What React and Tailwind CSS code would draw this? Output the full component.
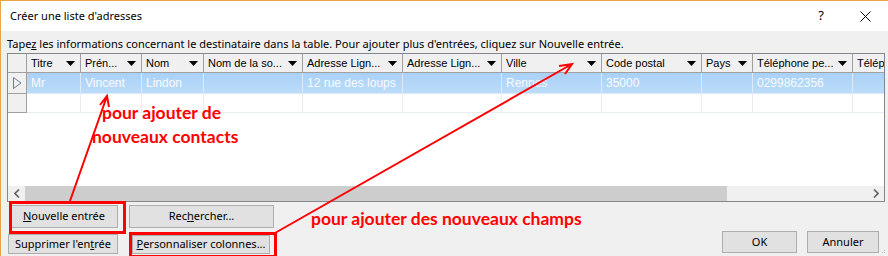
import React from "react";

const UI = "font-['Noto_Sans',sans-serif]";
const GRID = "font-['Liberation_Sans',Arial,sans-serif]";
const NOTE = "font-['Lato',sans-serif]";

const columns = [
  { label: "Titre", value: "Mr" },
  { label: "Prén...", value: "Vincent" },
  { label: "Nom", value: "Lindon" },
  { label: "Nom de la so...", value: "" },
  { label: "Adresse Lign...", value: "12 rue des loups" },
  { label: "Adresse Lign...", value: "" },
  { label: "Ville", value: "Rennes" },
  { label: "Code postal", value: "35000" },
  { label: "Pays", value: "" },
  { label: "Téléphone pe...", value: "0299862356" },
  { label: "Téléphone pr...", value: "" },
];

const DropArrow = () => (
  <svg width="9" height="5" viewBox="0 0 9 5" className="shrink-0">
    <polygon points="0,0 9,0 4.5,5" fill="#000" />
  </svg>
);

const Button = ({ children, className = "" }) => (
  <button
    className={`flex items-center justify-center whitespace-nowrap bg-[#e1e1e1] border border-[#adadad] text-[11px] text-black ${UI} ${className}`}
  >
    {children}
  </button>
);

export default function App() {
  return (
    <div className="relative w-[888px] h-[256px] overflow-hidden bg-[#f0f0f0] border-l border-t border-[#eaa54a]">
      {/* title bar */}
      <div className={`flex items-center h-[30px] bg-white pl-[9px] text-[11px] text-black ${UI}`}>
        <span>Créer une liste d'adresses</span>
        <span className="ml-auto mr-[36px] text-[13px]">?</span>
        <svg width="11" height="11" viewBox="0 0 11 11" className="mr-[17px]">
          <path d="M0.5 0.5 L10.5 10.5 M10.5 0.5 L0.5 10.5" stroke="#000" strokeWidth="1" />
        </svg>
      </div>

      {/* instructions */}
      <div className={`pl-[6px] mt-[5px] text-[11px] leading-[16px] text-black whitespace-nowrap ${UI}`}>
        Tape<span className="underline">z</span> les informations concernant le destinataire dans la table. Pour ajouter plus d'entrées, cliquez sur Nouvelle entrée.
      </div>

      {/* data grid */}
      <div className="ml-[6px] mt-[1px] w-[878px] h-[149px] border border-[#828790] bg-white flex flex-col overflow-hidden">
        <div className={`grid grid-cols-[19px_54px_61px_62px_99px_100px_99px_100px_100px_51px_100px_100px] grid-rows-[19px_21px_19px] text-[11px] ${GRID}`}>
          <div className="bg-[#f0f0f0] border-r border-b border-[#a0a0a0]" />
          {columns.map((c, i) => (
            <div
              key={"h" + i}
              className="flex items-center gap-[2px] pl-[4px] pr-[5px] bg-[#f0f0f0] border-r border-b border-[#a0a0a0] overflow-hidden whitespace-nowrap text-black"
            >
              <span className="flex-1 overflow-hidden">{c.label}</span>
              <DropArrow />
            </div>
          ))}

          <div className="flex items-center justify-center bg-[#f0f0f0] border-r border-b border-[#a0a0a0]">
            <svg width="9" height="12" viewBox="0 0 9 12">
              <polygon points="0.5,0.5 8,6 0.5,11.5" fill="none" stroke="#6b7b96" strokeWidth="1" />
            </svg>
          </div>
          {columns.map((c, i) => (
            <div
              key={"r" + i}
              className="flex items-center pl-[4px] bg-gradient-to-b from-[#aad1f8] to-[#bcdcf9] border-r border-b border-[#dcebfb] text-[#f8fbff] text-[12px] whitespace-nowrap overflow-hidden"
            >
              {c.value}
            </div>
          ))}

          <div className="bg-[#f0f0f0] border-r border-b border-[#a0a0a0]" />
          {columns.map((c, i) => (
            <div key={"e" + i} className="bg-white border-r border-b border-[#e8ecf5]" />
          ))}
        </div>
        <div className="flex-1 bg-white" />
        {/* horizontal scrollbar */}
        <div className="flex h-[15px] bg-[#f0f0f0]">
          <div className="w-[17px] flex items-center justify-center">
            <svg width="6" height="9" viewBox="0 0 6 9">
              <path d="M5 0.5 L1 4.5 L5 8.5" fill="none" stroke="#606060" strokeWidth="1.6" />
            </svg>
          </div>
          <div className="flex-1 flex items-stretch">
            <div className="w-[702px] bg-[#cdcdcd]" />
          </div>
          <div className="w-[17px] flex items-center justify-center">
            <svg width="6" height="9" viewBox="0 0 6 9">
              <path d="M1 0.5 L5 4.5 L1 8.5" fill="none" stroke="#606060" strokeWidth="1.6" />
            </svg>
          </div>
        </div>
      </div>

      {/* buttons */}
      <div className="flex mt-[3px]">
        <Button className="ml-[9px] w-[108px] h-[23px]">
          <span className="underline">N</span>ouvelle entrée
        </Button>
        <Button className="ml-[11px] w-[145px] h-[23px]">
          Rec<span className="underline">h</span>ercher...
        </Button>
      </div>
      <div className="flex items-start">
        <Button className="ml-[7px] mt-[6px] w-[110px] h-[20px]">
          Supprimer l'en<span className="underline">t</span>rée
        </Button>
        <Button className="ml-[14px] mt-[7px] w-[138px] h-[19px]">
          <span className="underline">P</span>ersonnaliser colonnes...
        </Button>
        <Button className="ml-auto mt-[3px] w-[75px] h-[22px]">OK</Button>
        <Button className="ml-[10px] mr-[9px] mt-[3px] w-[72px] h-[22px]">Annuler</Button>
      </div>

      {/* resize grip */}
      <svg className="absolute right-[2px] bottom-[2px]" width="4" height="4" viewBox="0 0 4 4">
        <rect x="2" y="0" width="1" height="1" fill="#b8b8b8" />
        <rect x="0" y="2" width="1" height="1" fill="#b8b8b8" />
        <rect x="2" y="2" width="1" height="1" fill="#b8b8b8" />
      </svg>

      {/* annotations */}
      <svg className="absolute left-0 top-0 pointer-events-none" width="888" height="256" viewBox="-1 -1 888 256">
        <rect x="8.5" y="200.5" width="114" height="30" fill="none" stroke="#ff0000" strokeWidth="3" />
        <rect x="128.5" y="231.5" width="145" height="23" fill="none" stroke="#ff0000" strokeWidth="3" />
        <path d="M68 199 L105 94 M98 103 L105 94 L107 105" fill="none" stroke="#ff0000" strokeWidth="2" />
        <path d="M273 231 L570 62 M557 64 L570 62 L563 72" fill="none" stroke="#ff0000" strokeWidth="2" />
      </svg>
      <div className={`absolute left-[91px] top-[100px] text-[17.5px] leading-[24px] font-bold text-[#ff0000] ${NOTE}`}>
        <div className="pl-[10px]">pour ajouter de</div>
        <div>nouveaux contacts</div>
      </div>
      <div className={`absolute left-[310px] top-[206px] text-[17.5px] leading-[24px] font-bold text-[#ff0000] ${NOTE}`}>
        pour ajouter des nouveaux champs
      </div>
    </div>
  );
}
